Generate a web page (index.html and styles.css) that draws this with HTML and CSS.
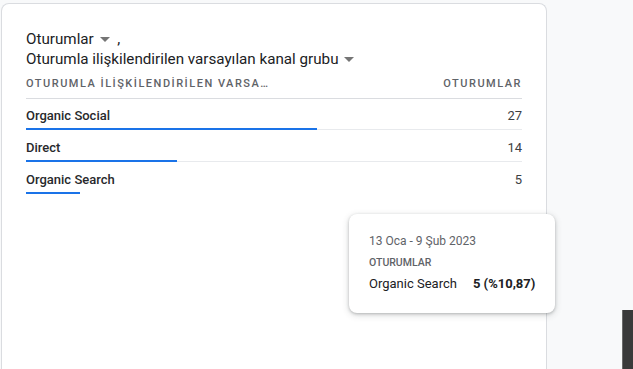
FILE: index.html
```html
<!DOCTYPE html>
<html lang="tr">

<head>
    <meta charset="UTF-8">
    <meta name="viewport" content="width=device-width, initial-scale=1.0">
    <title>Oturumlar - Kanal grubu</title>
    <link rel="stylesheet" href="styles.css">
</head>

<body>
    <div class="card">
        <div class="card-title">
            <div class="title-line">Oturumlar <span class="caret"></span> <span class="comma">,</span></div>
            <div class="title-line">Oturumla ilişkilendirilen varsayılan kanal grubu <span class="caret"></span></div>
        </div>

        <div class="table-head">
            <span>OTURUMLA İLİŞKİLENDİRİLEN VARSA…</span>
            <span>OTURUMLAR</span>
        </div>

        <div class="row">
            <div class="row-text">
                <span class="row-label">Organic Social</span>
                <span class="row-value">27</span>
            </div>
            <div class="track"><div class="fill" style="width: 291px"></div></div>
        </div>
        <div class="row">
            <div class="row-text">
                <span class="row-label">Direct</span>
                <span class="row-value">14</span>
            </div>
            <div class="track"><div class="fill" style="width: 151px"></div></div>
        </div>
        <div class="row">
            <div class="row-text">
                <span class="row-label">Organic Search</span>
                <span class="row-value">5</span>
            </div>
            <div class="track no-line"><div class="fill" style="width: 54px"></div></div>
        </div>
    </div>

    <div class="tooltip">
        <div class="tooltip-date">13 Oca - 9 Şub 2023</div>
        <div class="tooltip-metric">OTURUMLAR</div>
        <div class="tooltip-row">
            <span>Organic Search</span>
            <strong>5 (%10,87)</strong>
        </div>
    </div>

    <div class="side-panel"></div>
</body>

</html>
```

FILE: styles.css
```css
:root {
    --text-color: #202124;
    --muted-color: #5f6368;
    --border-color: #dadce0;
    --line-color: #e8eaed;
    --blue: #1a73e8;
    --page-bg: #f8f9fa;
}

* {
    margin: 0;
    padding: 0;
    box-sizing: border-box;
}

body {
    background-color: var(--page-bg);
    font-family: Roboto, 'Liberation Sans', Arial, sans-serif;
    color: var(--text-color);
    width: 633px;
    height: 369px;
    overflow: hidden;
    position: relative;
}

.card {
    margin: 3px 0 0 1px;
    width: 546px;
    height: 366px;
    background-color: white;
    border: 1px solid var(--border-color);
    border-bottom: none;
    border-radius: 8px 8px 0 0;
    padding: 25px 24px 0 24px;
}

.card-title {
    margin-bottom: 8px;
}

.title-line {
    font-size: 15.2px;
    line-height: 20px;
    white-space: nowrap;
}

.caret {
    display: inline-block;
    width: 0;
    height: 0;
    border-left: 5px solid transparent;
    border-right: 5px solid transparent;
    border-top: 5px solid #757575;
    vertical-align: middle;
    margin: 0 1px 0 2px;
}

.comma {
    margin-left: 3px;
}

.table-head {
    display: flex;
    justify-content: space-between;
    font-size: 11px;
    font-weight: 500;
    letter-spacing: 1.5px;
    color: var(--muted-color);
    line-height: 14px;
    padding-bottom: 7px;
    border-bottom: 1px solid var(--border-color);
}

.row {
    padding: 10px 0 1px 0;
}

.row-text {
    display: flex;
    justify-content: space-between;
    font-size: 13px;
    line-height: 14px;
    margin-bottom: 5px;
}

.row-label {
    font-weight: 500;
    color: #28292c;
}

.row-value {
    color: #3c4043;
}

.track {
    height: 2px;
    background: linear-gradient(var(--line-color), var(--line-color)) left bottom / 100% 1px no-repeat;
}

.track.no-line {
    background: none;
}

.fill {
    height: 2px;
    background-color: var(--blue);
}

.tooltip {
    position: absolute;
    left: 349px;
    top: 214px;
    width: 206px;
    height: 99px;
    background-color: white;
    border-radius: 8px;
    box-shadow: 0 1px 3px rgba(60, 64, 67, 0.3), 0 2px 6px 1px rgba(60, 64, 67, 0.15);
    padding: 20px 12px 0 20px;
}

.tooltip-date {
    font-size: 12px;
    line-height: 14px;
    color: var(--muted-color);
}

.tooltip-metric {
    font-size: 10.5px;
    font-weight: 500;
    color: var(--muted-color);
    margin-top: 8px;
    line-height: 14px;
}

.tooltip-row {
    display: flex;
    gap: 16px;
    font-size: 13px;
    line-height: 16px;
    margin-top: 6px;
    white-space: nowrap;
}

.tooltip-row strong {
    font-weight: 700;
}

.side-panel {
    position: absolute;
    left: 622px;
    top: 310px;
    width: 11px;
    height: 59px;
    background-color: #3a3a3a;
    border-left: 1px solid #6a6a6a;
}
```
